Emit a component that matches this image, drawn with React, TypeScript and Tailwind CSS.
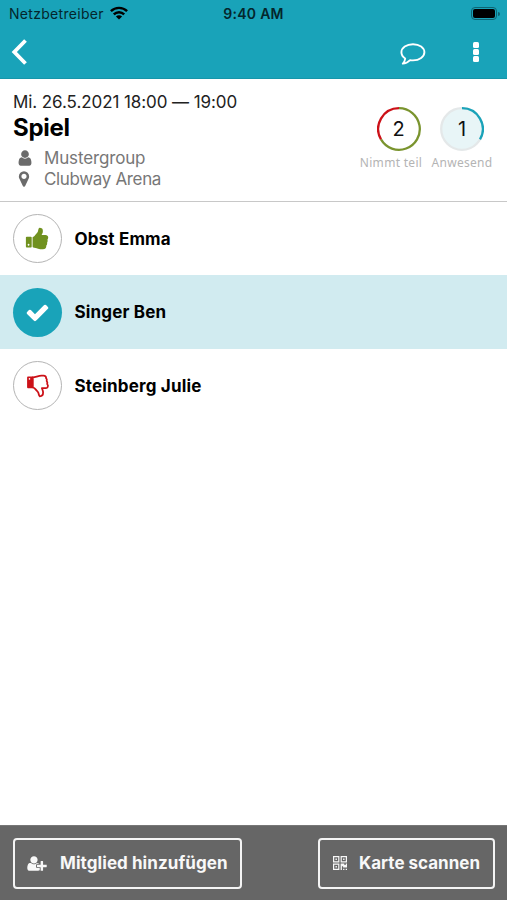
import React from 'react';

type IconProps = { className?: string };

const UserIcon = ({ className }: IconProps) => (
  <svg viewBox="0 0 1792 1792" fill="currentColor" className={className}>
    <path d="M1536 1399q0 109-62.5 187t-150.5 78h-854q-88 0-150.5-78t-62.5-187q0-85 8.5-160.5t31.5-152 58.5-131 94-89 134.5-34.5q131 128 313 128t313-128q76 0 134.5 34.5t94 89 58.5 131 31.5 152 8.5 160.5zm-256-887q0 159-112.5 271.5t-271.5 112.5-271.5-112.5-112.5-271.5 112.5-271.5 271.5-112.5 271.5 112.5 112.5 271.5z" />
  </svg>
);

const MarkerIcon = ({ className }: IconProps) => (
  <svg viewBox="0 0 1792 1792" fill="currentColor" className={className}>
    <path d="M1152 640q0-106-75-181t-181-75-181 75-75 181 75 181 181 75 181-75 75-181zm256 0q0 109-33 179l-364 774q-16 33-47.5 52t-67.5 19-67.5-19-46.5-52l-365-774q-33-70-33-179 0-212 150-362t362-150 362 150 150 362z" />
  </svg>
);

const ThumbUpIcon = ({ className }: IconProps) => (
  <svg viewBox="0 0 1792 1792" fill="currentColor" className={className}>
    <path d="M320 1344q0-26-19-45t-45-19q-27 0-45.5 19t-18.5 45q0 27 18.5 45.5t45.5 18.5q26 0 45-18.5t19-45.5zm160-512v640q0 26-19 45t-45 19h-288q-26 0-45-19t-19-45v-640q0-26 19-45t45-19h288q26 0 45 19t19 45zm1184 0q0 86-55 149 15 44 15 76 3 76-43 137 17 56 0 117-15 57-54 94 9 112-49 181-64 76-197 78h-129q-66 0-144-15.5t-121.5-29-120.5-39.5q-123-43-158-44-26-1-45-19.5t-19-44.5v-641q0-25 18-43.5t43-20.5q24-2 76-59t101-121q68-87 101-120 18-18 31-48t17.5-48.5 13.5-60.5q7-39 12.5-61t19.5-52 34-50q19-19 45-19 46 0 82.5 10.5t60 26 40 40.5 24 45 12 50 5 45 .5 39q0 38-9.5 76t-19 60-27.5 56q-3 6-10 18t-11 22-8 24h277q78 0 135 57t57 135z" />
  </svg>
);

const ThumbDownIcon = ({ className }: IconProps) => (
  <svg viewBox="0 0 24 24" className={className}>
    <path fill="currentColor" fillRule="evenodd" d="M2 2.6h5v11.6H2a.9.9 0 0 1-.9-.9V3.5A.9.9 0 0 1 2 2.6Zm1.5 1.5a.8.8 0 1 0 0 1.6.8.8 0 0 0 0-1.6Z" />
    <path
      fill="none"
      stroke="currentColor"
      strokeWidth="1.8"
      strokeLinejoin="round"
      d="M6.8 3.5C10 3.1 12.5 1.7 15.5 1.7H17.6C19.3 1.7 20.2 2.7 20.1 4.2C20.9 5 21 6 20.7 7C21.5 8 21.5 9 21.2 10C22 11 22.2 12 21.7 13C21.4 13.7 20.7 14.1 19.9 14.1H15.9C16.2 15.5 17.1 16.5 17.1 18.6C17.1 21 16 22.3 13.8 22.3C12.7 21.5 12.8 19.5 12.2 18.4C11.3 17.5 9 13.7 6.8 13.3Z"
    />
  </svg>
);

const CheckIcon = ({ className }: IconProps) => (
  <svg viewBox="0 0 1792 1792" fill="currentColor" className={className}>
    <path d="M1671 566q0 40-28 68l-724 724-136 136q-28 28-68 28t-68-28l-136-136-362-362q-28-28-28-68t28-68l136-136q28-28 68-28t68 28l294 295 656-657q28-28 68-28t68 28l136 136q28 28 28 68z" />
  </svg>
);

const UserPlusIcon = ({ className }: IconProps) => (
  <svg viewBox="0 0 2048 1792" fill="currentColor" className={className}>
    <path d="M704 896q-159 0-271.5-112.5t-112.5-271.5 112.5-271.5 271.5-112.5 271.5 112.5 112.5 271.5-112.5 271.5-271.5 112.5zm960 128h352q13 0 22.5 9.5t9.5 22.5v192q0 13-9.5 22.5t-22.5 9.5h-352v352q0 13-9.5 22.5t-22.5 9.5h-192q-13 0-22.5-9.5t-9.5-22.5v-352h-352q-13 0-22.5-9.5t-9.5-22.5v-192q0-13 9.5-22.5t22.5-9.5h352v-352q0-13 9.5-22.5t22.5-9.5h192q13 0 22.5 9.5t9.5 22.5v352zm-736 224q0 52 38 90t90 38h256v238q-68 50-171 50h-874q-121 0-194-69t-73-190q0-53 3.5-103.5t14-109 26.5-108.5 43-97.5 62-81 85.5-53.5 111.5-20q19 0 39 17 79 61 154.5 91.5t164.5 30.5 164.5-30.5 154.5-91.5q20-17 39-17 132 0 217 96h-223q-52 0-90 38t-38 90v192z" />
  </svg>
);

const QrIcon = ({ className }: IconProps) => (
  <svg viewBox="0 0 14 14" fill="currentColor" className={className}>
    <path
      fillRule="evenodd"
      d="M0 0h6.4v6.4H0zM1.2 1.2v4h4v-4zM7.6 0H14v6.4H7.6zM8.8 1.2v4h4v-4zM0 7.6h6.4V14H0zM1.2 8.8v4h4v-4zM2.5 2.5h1.4v1.4H2.5zM10.1 2.5h1.4v1.4h-1.4zM2.5 10.1h1.4v1.4H2.5zM7.6 7.6h3.8v1.3h1.3V7.6H14v3.9h-3.9v-1.3H8.9V14H7.6zM10.1 12.7h1.3V14h-1.3zM12.7 12.7H14V14h-1.3z"
    />
  </svg>
);

const WifiIcon = ({ className }: IconProps) => (
  <svg viewBox="0 0 18 14" className={className}>
    <g fill="none" stroke="currentColor" strokeWidth="2.4">
      <path d="M0.9 5.2C5.4 0.7 12.6 0.7 17.1 5.2" />
      <path d="M3.8 8.4C6.7 5.5 11.3 5.5 14.2 8.4" />
    </g>
    <path fill="currentColor" d="M5.9 10.4C7.6 8.8 10.4 8.8 12.1 10.4L9 13.6Z" />
  </svg>
);

type CounterProps = { value: number; label: string; className: string; labelClass: string; children: React.ReactNode };

const Counter = ({ value, label, className, labelClass, children }: CounterProps) => (
  <div className={`flex w-[60px] flex-col ${className}`}>
    <div className="grid size-[44px] place-items-center">
      <svg viewBox="0 0 44 44" className="col-start-1 row-start-1 size-[44px]" fill="none" strokeWidth="2.3">
        {children}
      </svg>
      <span className="col-start-1 row-start-1 text-[20px] leading-[24px] text-[#111]">{value}</span>
    </div>
    <span className={`mt-[4px] self-center whitespace-nowrap font-['Noto_Sans',sans-serif] text-[12px] leading-[16px] text-[#b4b4b4] ${labelClass}`}>
      {label}
    </span>
  </div>
);

type MemberProps = { name: string; rowClass: string; badgeClass: string; children: React.ReactNode };

const Member = ({ name, rowClass, badgeClass, children }: MemberProps) => (
  <li className={`flex items-center pl-[13px] ${rowClass}`}>
    <span className={`flex size-[49px] items-center justify-center rounded-full ${badgeClass}`}>{children}</span>
    <span className="ml-[12.5px] text-[17px] font-bold leading-[22px] tracking-[0.17px] text-black">{name}</span>
  </li>
);

export default function App() {
  return (
    <div className="flex h-[900px] w-[507px] flex-col overflow-hidden bg-white font-[Inter,sans-serif]">
      <header className="flex h-[79px] flex-col border-b border-[#1696aa] bg-[#19a3b9]">
        <div className="grid h-[27px] grid-cols-3 items-center pl-[9px] pr-[7px] text-[#04262c]">
          <div className="flex items-center">
            <span className="text-[14px] leading-[20px] tracking-[0.3px]">Netzbetreiber</span>
            <WifiIcon className="-mt-[2px] ml-[6px] h-[14px] w-[18px] text-black" />
          </div>
          <span className="-ml-[2px] text-center text-[14px] font-semibold leading-[20px] tracking-[0.3px]">9:40 AM</span>
          <div className="flex items-center justify-end">
            <span className="flex h-[13px] w-[26px] rounded-[4px] border border-[#0d6573] p-[1px]">
              <span className="flex-1 rounded-[2px] bg-black" />
            </span>
            <span className="ml-[1px] h-[4px] w-[2px] rounded-r-full bg-[#0d6573]" />
          </div>
        </div>
        <div className="flex h-[49px] items-center justify-between pl-[10px] pr-[28px] text-white">
          <svg viewBox="0 0 18 28" className="h-[28px] w-[18px]" fill="none" stroke="currentColor" strokeWidth="3.8">
            <path d="M15.5 2.5L4.3 14L15.5 25.5" />
          </svg>
          <div className="flex items-center">
            <svg viewBox="0 0 26 22" className="mt-[4px] h-[22px] w-[26px]" fill="none" stroke="currentColor" strokeWidth="1.9" strokeLinejoin="round">
              <path d="M13 1.2C19.5 1.2 24.4 4.8 24.4 9.3S19.5 17.4 13 17.4C12 17.4 11 17.3 10.1 17.1C8.3 18.9 6 20.5 2.8 20.6C4.2 19.3 5 17.5 5.2 15.5C2.8 14 1.4 11.7 1.4 9.3C1.4 4.8 6.5 1.2 13 1.2Z" />
            </svg>
            <span className="ml-[47px] flex flex-col gap-px">
              <span className="size-[6px] rounded-[1.5px] bg-white" />
              <span className="size-[6px] rounded-[1.5px] bg-white" />
              <span className="size-[6px] rounded-[1.5px] bg-white" />
            </span>
          </div>
        </div>
      </header>

      <section className="flex h-[123px] justify-between border-b border-[#c8c8c8] pl-[13px] pr-[15px]">
        <div className="flex flex-col pt-[12px]">
          <p className="whitespace-nowrap text-[17px] leading-[22px] tracking-[-0.08px] text-[#222]">Mi. 26.5.2021 18:00 — 19:00</p>
          <h1 className="mt-[1px] text-[24px] font-bold leading-[28px] tracking-[-0.3px] text-black">Spiel</h1>
          <div className="mt-[6px] flex h-[21px] items-center text-[17px] leading-[21px] tracking-[-0.15px] text-[#777]">
            <UserIcon className="-mt-[2px] ml-[3px] size-[18px] text-[#6b6b6b]" />
            <span className="ml-[10px]">Mustergroup</span>
          </div>
          <div className="flex h-[21px] items-center text-[17px] leading-[21px] tracking-[-0.35px] text-[#777]">
            <MarkerIcon className="-mt-[2px] ml-[2px] size-[18px] text-[#6b6b6b]" />
            <span className="ml-[11px]">Clubway Arena</span>
          </div>
        </div>
        <div className="flex gap-[11px] pt-[28px]">
          <Counter value={2} label="Nimmt teil" className="*:first:ml-[15.5px]" labelClass="tracking-[0.3px]">
            <path stroke="#7a942e" d="M22 1.2A20.8 20.8 0 1 1 4 32.4" />
            <path stroke="#cc1118" d="M4 32.4A20.8 20.8 0 0 1 22 1.2" />
          </Counter>
          <Counter value={1} label="Anwesend" className="*:first:ml-[8px]" labelClass="tracking-[0.3px]">
            <circle cx="22" cy="22" r="20.8" fill="#e8f5f7" stroke="#e4e8e9" />
            <path stroke="#19a3b9" d="M22 1.2A20.8 20.8 0 0 1 40 32.4" />
          </Counter>
        </div>
      </section>

      <ul className="flex-1">
        <Member name="Obst Emma" rowClass="h-[73px]" badgeClass="border border-[#b4b4b4] bg-white text-[#70911f]">
          <ThumbUpIcon className="size-[25px]" />
        </Member>
        <Member name="Singer Ben" rowClass="h-[74px] bg-[#d1ebf0]" badgeClass="bg-[#19a3b9] text-white">
          <CheckIcon className="size-[25px]" />
        </Member>
        <Member name="Steinberg Julie" rowClass="h-[73px]" badgeClass="border border-[#b4b4b4] bg-white text-[#cc1118]">
          <ThumbDownIcon className="size-[24px]" />
        </Member>
      </ul>

      <footer className="flex h-[75px] items-center justify-between border-t border-[#777] bg-[#666] pl-[13px] pr-[12px] text-[17px] font-bold leading-[24px] text-[#f8f8f8]">
        <button className="flex h-[51px] w-[229px] items-center rounded-[4px] border-2 border-[#f4f4f4]">
          <UserPlusIcon className="ml-[12px] h-[17px] w-[20px]" />
          <span className="ml-[13px] whitespace-nowrap tracking-[0.07px]">Mitglied hinzufügen</span>
        </button>
        <button className="flex h-[51px] w-[177px] items-center rounded-[4px] border-2 border-[#f4f4f4]">
          <QrIcon className="ml-[13px] size-[14px]" />
          <span className="ml-[12px] whitespace-nowrap">Karte scannen</span>
        </button>
      </footer>
    </div>
  );
}
